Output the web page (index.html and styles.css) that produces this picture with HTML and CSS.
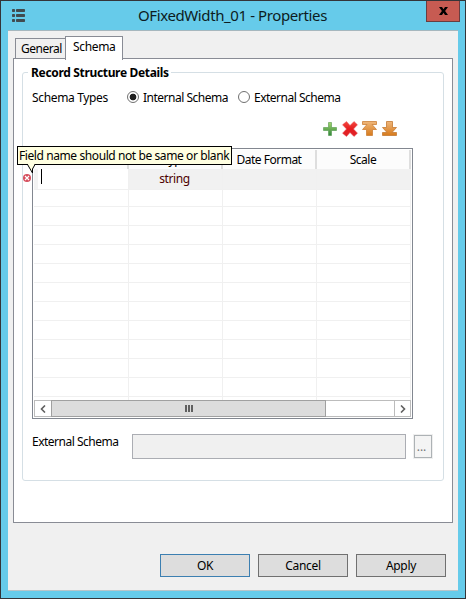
FILE: index.html
```html
<!DOCTYPE html>
<html lang="en">
<head>
<meta charset="utf-8">
<title>OFixedWidth_01 - Properties</title>
<link rel="stylesheet" href="styles.css">
</head>
<body>
<div class="window">
  <header class="titlebar">
    <svg class="app-icon" width="13" height="13" viewBox="0 0 13 13" fill="#414b50"><rect width="3" height="3" rx=".7"/><rect x="4" width="9" height="3" rx=".7"/><rect y="5" width="3" height="3" rx=".7"/><rect x="4" y="5" width="9" height="3" rx=".7"/><rect y="10" width="3" height="3" rx=".7"/><rect x="4" y="10" width="9" height="3" rx=".7"/></svg>
    <h1 class="title">OFixedWidth_01 - Properties</h1>
    <button class="close" aria-label="Close"><svg width="9" height="8" viewBox="0 0 9 8"><path d="M0 0h3l1.500 2.300L6 0h3L6.100 4 9 8H6L4.500 5.700 3 8H0l2.900-4z" fill="#000"/></svg></button>
  </header>
  <main class="client">
    <nav class="tabs"><div class="tab general">General</div><div class="tab active">Schema</div></nav>
    <section class="panel">
      <div class="group">
        <h2 class="legend">Record Structure Details</h2>
        <div class="types">
          <span class="types-label">Schema Types</span>
          <span class="radio checked"></span><span class="radio-label first">Internal Schema</span>
          <span class="radio"></span><span class="radio-label">External Schema</span>
        </div>
        <div class="toolbar">
          <svg width="78" height="18" viewBox="0 0 78 18">
            <defs>
              <linearGradient id="green" x2="0" y2="1"><stop stop-color="#a5d46c"/><stop offset="1" stop-color="#30863c"/></linearGradient>
              <linearGradient id="red" x2="0" y2="1"><stop stop-color="#f5483f"/><stop offset=".5" stop-color="#e51d20"/><stop offset="1" stop-color="#df2329"/></linearGradient>
              <linearGradient id="orange" x2="0" y2="1"><stop stop-color="#efb77b"/><stop offset="1" stop-color="#d77a1b"/></linearGradient>
            </defs>
            <path d="M6.500 2.500h3v5h5v3h-5v5h-3v-5h-5v-3h5z" fill="url(#green)" stroke="#489344" stroke-opacity=".55"/>
            <path d="M24.500 1.500 28 5.500l4-4 3.500 3.300-4 4.200 4 4.200-3.500 3.300-4-4-3.500 4-4-3.300 4-4.200-4-4.200z" fill="url(#red)" stroke="#e8555a" stroke-width=".5"/>
            <path d="M40.500 1.500h14v3h-4.500l4.500 5h-4v6h-6v-6h-4l4.500-5h-4.500z" fill="url(#orange)" stroke="#cb8039" stroke-width=".8"/>
            <path d="M64.500 1.500h6v6h4l-4.500 5h4.500v3h-14v-3h4.500l-4.500-5h4z" fill="url(#orange)" stroke="#c47a32" stroke-width=".8"/>
          </svg>
        </div>
        <div class="table">
          <div class="row head"><span></span><span class="type-head">Type</span><span>Date Format</span><span>Scale</span></div>
          <div class="row current"><span class="editor"><i class="caret"></i></span><span class="value">string</span><span></span><span></span></div>
          <div class="row"><span></span><span></span><span></span><span></span></div>
          <div class="row"><span></span><span></span><span></span><span></span></div>
          <div class="row"><span></span><span></span><span></span><span></span></div>
          <div class="row"><span></span><span></span><span></span><span></span></div>
          <div class="row"><span></span><span></span><span></span><span></span></div>
          <div class="row"><span></span><span></span><span></span><span></span></div>
          <div class="row"><span></span><span></span><span></span><span></span></div>
          <div class="row"><span></span><span></span><span></span><span></span></div>
          <div class="row"><span></span><span></span><span></span><span></span></div>
          <div class="row"><span></span><span></span><span></span><span></span></div>
          <div class="row"><span></span><span></span><span></span><span></span></div>
          <div class="row last"><span></span><span></span><span></span><span></span></div>
          <div class="scrollbar">
            <span class="arrow left"><svg width="6" height="8" viewBox="0 0 6 8"><path d="M5 .5 1.500 4 5 7.500" fill="none" stroke="#606060" stroke-width="1.600"/></svg></span>
            <span class="thumb"><i></i><i></i><i></i></span>
            <span class="arrow right"><svg width="6" height="8" viewBox="0 0 6 8"><path d="M1 .5 4.500 4 1 7.500" fill="none" stroke="#606060" stroke-width="1.600"/></svg></span>
          </div>
        </div>
        <div class="external"><span class="external-label">External Schema</span><span class="input"></span><button class="browse">...</button></div>
        <svg class="error" width="8" height="8" viewBox="0 0 8 8"><circle cx="4" cy="4" r="4" fill="#d64e5d"/><path d="m2 2 4 4m0-4L2 6" stroke="#fff" stroke-width="1.200"/></svg>
        <div class="tooltip"><span>Field name should not be same or blank</span>
          <svg class="tail" width="9" height="12" viewBox="0 0 9 12"><path d="M1 0v1.500L5.500 10V6L7.500 1.500V0z" fill="#ffffe1"/><path d="M.5 1.500 5.500 10V6L8 1.500" fill="none" stroke="#000"/></svg>
        </div>
      </div>
    </section>
    <footer class="actions"><button class="ok">OK</button><button class="cancel">Cancel</button><button class="apply">Apply</button></footer>
  </main>
</div>
</body>
</html>
```

FILE: styles.css
```css
* { box-sizing: border-box; }
body { margin: 0; font: 12px/16px "Noto Sans", sans-serif; letter-spacing: -.5px; color: #000; white-space: nowrap; }
button { font: inherit; letter-spacing: -.3px; color: inherit; padding: 0; border-radius: 0; }
.window { width: 466px; height: 599px; border: 1px solid #343438; background: #66cbea; padding: 0 7px 7px; }
.titlebar { height: 29px; display: flex; align-items: flex-start; }
.app-icon { margin: 8px 0 0 4px; }
.title { flex: 1; margin: 4px 0 0 113px; font-size: 15px; line-height: 20px; font-weight: 400; letter-spacing: -.4px; color: #0d1c22; }
.close { width: 34px; height: 21px; margin-right: -2px; background: #c75b52; border: 1px solid #693d40; border-top: 0; display: grid; place-items: center; }
.client { width: 450px; height: 561px; background: #f0f0f0; border-top: 1px solid #a6b7be; border-bottom: 1px solid #b7c4c9; padding: 5px 5px 0; }
.tabs { height: 22px; display: flex; align-items: flex-end; padding-left: 2px; }
.tab { position: relative; border: 1px solid #898c95; border-bottom: 0; }
.general { width: 51px; height: 20px; padding: 2px 0 0 5px; }
.tab.active { width: 58px; height: 24px; margin: 0 0 -2px -1px; padding: 2px 0 0 7px; background: #fff; letter-spacing: -.35px; z-index: 1; }
.panel { width: 440px; height: 465px; border: 1px solid #898c95; background: #fff; padding: 13px 0 0 8px; }
.group { position: relative; width: 422px; height: 409px; border: 1px solid #d5dfe5; border-radius: 3px; padding-left: 9px; }
.legend { width: 143px; height: 16px; margin: -8px 0 0 -4px; padding-left: 3px; background: #fff; font-size: 12px; line-height: 16px; font-weight: 700; letter-spacing: -.33px; }
.types { height: 16px; margin-top: 8px; display: flex; align-items: center; line-height: 18px; }
.types-label { width: 95px; padding-top: 1px; letter-spacing: -.35px; }
.radio { width: 12px; height: 12px; border: 1px solid #707070; border-radius: 50%; background: #fff; }
.radio.checked { background: radial-gradient(circle, #202020 0 3px, #fff 3.700px); }
.radio-label { margin-left: 4px; padding-top: 1px; }
.radio-label.first { width: 95px; }
.toolbar { height: 18px; margin: 15px 0 0 290px; }
.toolbar svg { display: block; }
.table { width: 381px; height: 271px; margin-top: 10px; border: 1px solid #828790; padding: 1px; }
.row { display: grid; grid-template-columns: 95px 94px 94px 94px; width: 377px; height: 19px; }
.row > span { border-right: 1px solid #f0f0f0; border-bottom: 1px solid #f0f0f0; text-align: center; line-height: 18px; }
.row.head > span { background: #fcfcfc; border-color: #dedede; border-width: 0 2px 1px 0; border-style: solid; line-height: 19px; }
.row.current > span { background: #f1f1f1; line-height: 20px; }
.row.current > .editor { background: #fff; border-left: 4px solid #f3f3f3; }
.row.current > .value { padding-right: 2px; letter-spacing: -.4px; color: #4d0000; }
.caret { display: block; width: 1px; height: 15px; margin: 0 0 0 3px; background: #000; }
.row.last { height: 3px; }
.row.last > span { border-bottom: 0; }
.scrollbar { width: 377px; height: 17px; border: 1px solid #bcbcbc; display: flex; justify-content: space-between; background: #fff; }
.arrow { width: 16px; display: grid; place-items: center; }
.arrow.right { border-left: 1px solid #bcbcbc; }
.thumb { width: 275px; height: 17px; margin: -1px 68px 0 0; border: 1px solid #a0a0a0; background: #dcdcdc; display: flex; justify-content: center; align-items: center; gap: 1px; }
.thumb i { width: 2px; height: 7px; background: #606060; }
.external { height: 25px; margin-top: 15px; display: flex; }
.external-label { width: 100px; }
.input { width: 274px; background: #f0f0f0; border: 1px solid #abadb3; }
.browse { width: 18px; height: 23px; margin: 1px 0 0 8px; background: #f4f4f4; border: 1px solid #adb2b5; outline: 1px solid #efefef; color: #777; letter-spacing: 0; padding-right: 3px; }
.error { position: absolute; left: 0; top: 101px; }
.tooltip { position: absolute; left: -6px; top: 73px; width: 215px; height: 19px; background: #ffffe1; border: 1px solid #000; padding: 1px 0 0 1px; letter-spacing: -.41px; }
.tail { position: absolute; left: 9px; top: 16px; }
.actions { display: flex; justify-content: flex-end; gap: 8px; margin-top: 31px; padding-right: 7px; }
.actions button { width: 90px; height: 23px; background: #ddd; border: 1px solid #707070; }
.actions .ok { border-color: #3c7fb1; }
```
